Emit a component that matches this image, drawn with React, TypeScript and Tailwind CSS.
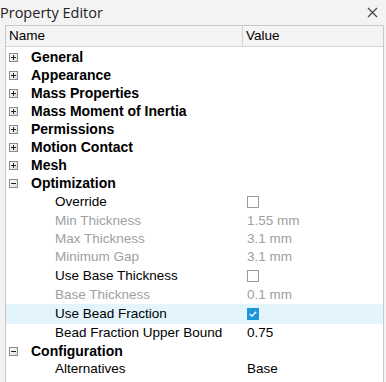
import React from "react";

type Row =
  | { kind: "group"; label: string; open: boolean }
  | { kind: "prop"; label: string; value?: string; check?: boolean; checked?: boolean; dim?: boolean; selected?: boolean };

const rows: Row[] = [
  { kind: "group", label: "General", open: false },
  { kind: "group", label: "Appearance", open: false },
  { kind: "group", label: "Mass Properties", open: false },
  { kind: "group", label: "Mass Moment of Inertia", open: false },
  { kind: "group", label: "Permissions", open: false },
  { kind: "group", label: "Motion Contact", open: false },
  { kind: "group", label: "Mesh", open: false },
  { kind: "group", label: "Optimization", open: true },
  { kind: "prop", label: "Override", check: true },
  { kind: "prop", label: "Min Thickness", value: "1.55 mm", dim: true },
  { kind: "prop", label: "Max Thickness", value: "3.1 mm", dim: true },
  { kind: "prop", label: "Minimum Gap", value: "3.1 mm", dim: true },
  { kind: "prop", label: "Use Base Thickness", check: true },
  { kind: "prop", label: "Base Thickness", value: "0.1 mm", dim: true },
  { kind: "prop", label: "Use Bead Fraction", check: true, checked: true, selected: true },
  { kind: "prop", label: "Bead Fraction Upper Bound", value: "0.75" },
  { kind: "group", label: "Configuration", open: true },
  { kind: "prop", label: "Alternatives", value: "Base" },
];

function Expander({ open }: { open: boolean }) {
  return (
    <svg width="9" height="9" viewBox="0 0 9 9" className="shrink-0">
      <defs>
        <linearGradient id="eg" x1="0" y1="0" x2="1" y2="1">
          <stop offset="0" stopColor="#ffffff" />
          <stop offset="1" stopColor="#dcdcdc" />
        </linearGradient>
      </defs>
      <rect x="0.5" y="0.5" width="8" height="8" fill="url(#eg)" stroke="#8c8c8c" />
      <line x1="2" y1="4.5" x2="7" y2="4.5" stroke="#222" />
      {!open && <line x1="4.5" y1="2" x2="4.5" y2="7" stroke="#222" />}
    </svg>
  );
}

function Check({ checked }: { checked?: boolean }) {
  if (checked) {
    return (
      <div className="flex h-[12px] w-[12px] items-center justify-center bg-[#1c97d9]">
        <svg width="8" height="6" viewBox="0 0 8 6">
          <path d="M0.8 3 L3 5.2 L7.2 0.8" fill="none" stroke="#fff" strokeWidth="1.3" />
        </svg>
      </div>
    );
  }
  return <div className="h-[12px] w-[12px] border border-[#9a9a9a] bg-white" />;
}

export default function App() {
  return (
    <div className="h-[382px] w-[386px] overflow-hidden bg-[#f3f3f3] font-['Liberation_Sans',Arial,sans-serif] text-[13px] text-black">
      <div className="flex h-[25px] items-center justify-between pr-[8px]">
        <span className="font-['Open_Sans',sans-serif] text-[14.5px] text-[#222]">Property Editor</span>
        <svg width="11" height="11" viewBox="0 0 11 11">
          <path d="M1 1 L10 10 M10 1 L1 10" stroke="#444" strokeWidth="1.2" />
        </svg>
      </div>
      <div className="ml-[5px] mr-[2px] h-[400px] border border-[#c8c8c8] bg-white">
        <div className="flex h-[21px] border-b border-[#d4d4d4] bg-[#f4f4f4]">
          <div className="flex w-[237px] items-center border-r border-[#d4d4d4] pl-[3px] text-[13.5px]">Name</div>
          <div className="flex items-center pl-[3px] text-[13.5px]">Value</div>
        </div>
        <div className="pt-px">
          {rows.map((r, i) =>
            r.kind === "group" ? (
              <div key={i} className="flex h-[18px] items-center">
                <div className="flex w-[25px] justify-end pr-[13px] pt-px">
                  <Expander open={r.open} />
                </div>
                <span className="text-[14px] font-bold">{r.label}</span>
              </div>
            ) : (
              <div
                key={i}
                className={`flex items-center ${r.check ? "h-[20px]" : "h-[18px]"} ${r.selected ? "bg-[#e3f4fc]" : ""}`}
              >
                <div
                  className={`w-[238px] overflow-hidden whitespace-nowrap pl-[49px] text-[13.5px] ${r.dim ? "text-[#a0a0a0]" : ""}`}
                >
                  {r.label}
                </div>
                <div className={`pl-[3px] text-[13.5px] ${r.dim ? "text-[#a0a0a0]" : ""}`}>
                  {r.check ? <Check checked={r.checked} /> : r.value}
                </div>
              </div>
            )
          )}
        </div>
      </div>
    </div>
  );
}
